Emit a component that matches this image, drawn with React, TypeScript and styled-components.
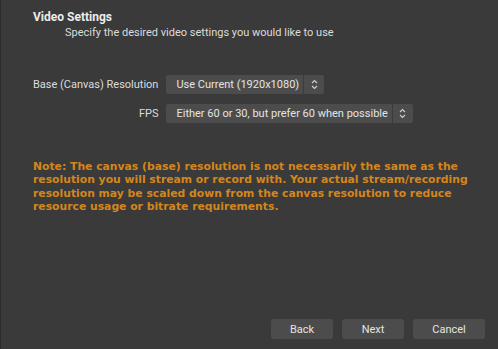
import React from "react";
import styled, { createGlobalStyle } from "styled-components";

const Global = createGlobalStyle`
  html, body { margin: 0; padding: 0; background: #3a3a3a; }
  body { font-family: Roboto, "Liberation Sans", sans-serif; font-size: 11px; color: #dcdcdc; }
`;

const Window = styled.div`
  width: 498px;
  height: 349px;
  box-sizing: border-box;
  border-left: 1px solid #2c2c2c;
  background: #3a3a3a;
  display: flex;
  flex-direction: column;
  padding: 10px 0 10px 32px;
`;

const Title = styled.div`
  font-size: 12px;
  font-weight: 700;
  line-height: 15px;
  color: #ececec;
`;

const Subtitle = styled.div`
  padding-left: 32px;
  line-height: 15px;
  color: #dcdcdc;
`;

const Form = styled.div`
  margin-top: 35px;
  display: grid;
  grid-template-columns: auto auto;
  column-gap: 8px;
  row-gap: 10px;
  justify-content: start;
  justify-items: start;
  align-items: center;
`;

const Label = styled.div`
  justify-self: end;
  white-space: nowrap;
  color: #dcdcdc;
`;

const Combo = styled.div`
  display: flex;
  height: 19px;
  background: #4c4c4c;
  border-radius: 2px;
  overflow: hidden;
`;

const ComboText = styled.div`
  padding: 0 4px 0 10px;
  line-height: 19px;
  color: #e4e4e4;
  white-space: nowrap;
  border-right: 1px solid #3c3c3c;
`;

const Spin = styled.div`
  width: 20px;
  display: flex;
  align-items: center;
  justify-content: center;
`;

const Note = styled.div`
  margin-top: 37px;
  width: 446px;
  font-family: "DejaVu Sans", Verdana, sans-serif;
  font-size: 10.8px;
  font-weight: 700;
  color: #d4861c;
  line-height: 13.4px;
`;

const Spacer = styled.div`
  flex: 1;
`;

const Buttons = styled.div`
  display: flex;
  justify-content: flex-end;
  gap: 9px;
  padding-right: 13px;
`;

const Button = styled.button<{ $w: number }>`
  width: ${(p) => p.$w}px;
  height: 20px;
  border: none;
  border-radius: 3px;
  background: #4c4c4c;
  color: #e4e4e4;
  font: inherit;
  padding: 0;
`;

const Chevrons = () => (
  <svg width="7" height="11" viewBox="0 0 7 11" fill="none" stroke="#cfcfcf" strokeWidth="1.1">
    <path d="M1 4 L3.5 1.5 L6 4" />
    <path d="M1 7 L3.5 9.5 L6 7" />
  </svg>
);

export default function App() {
  return (
    <>
      <Global />
      <Window>
        <Title>Video Settings</Title>
        <Subtitle>Specify the desired video settings you would like to use</Subtitle>
        <Form>
          <Label>Base (Canvas) Resolution</Label>
          <Combo>
            <ComboText>Use Current (1920x1080)</ComboText>
            <Spin><Chevrons /></Spin>
          </Combo>
          <Label>FPS</Label>
          <Combo>
            <ComboText>Either 60 or 30, but prefer 60 when possible</ComboText>
            <Spin><Chevrons /></Spin>
          </Combo>
        </Form>
        <Note>
          Note: The canvas (base) resolution is not necessarily the same as the resolution you will
          stream or record with. Your actual stream/recording resolution may be scaled down from the
          canvas resolution to reduce resource usage or bitrate requirements.
        </Note>
        <Spacer />
        <Buttons>
          <Button $w={62}>Back</Button>
          <Button $w={62}>Next</Button>
          <Button $w={72}>Cancel</Button>
        </Buttons>
      </Window>
    </>
  );
}
